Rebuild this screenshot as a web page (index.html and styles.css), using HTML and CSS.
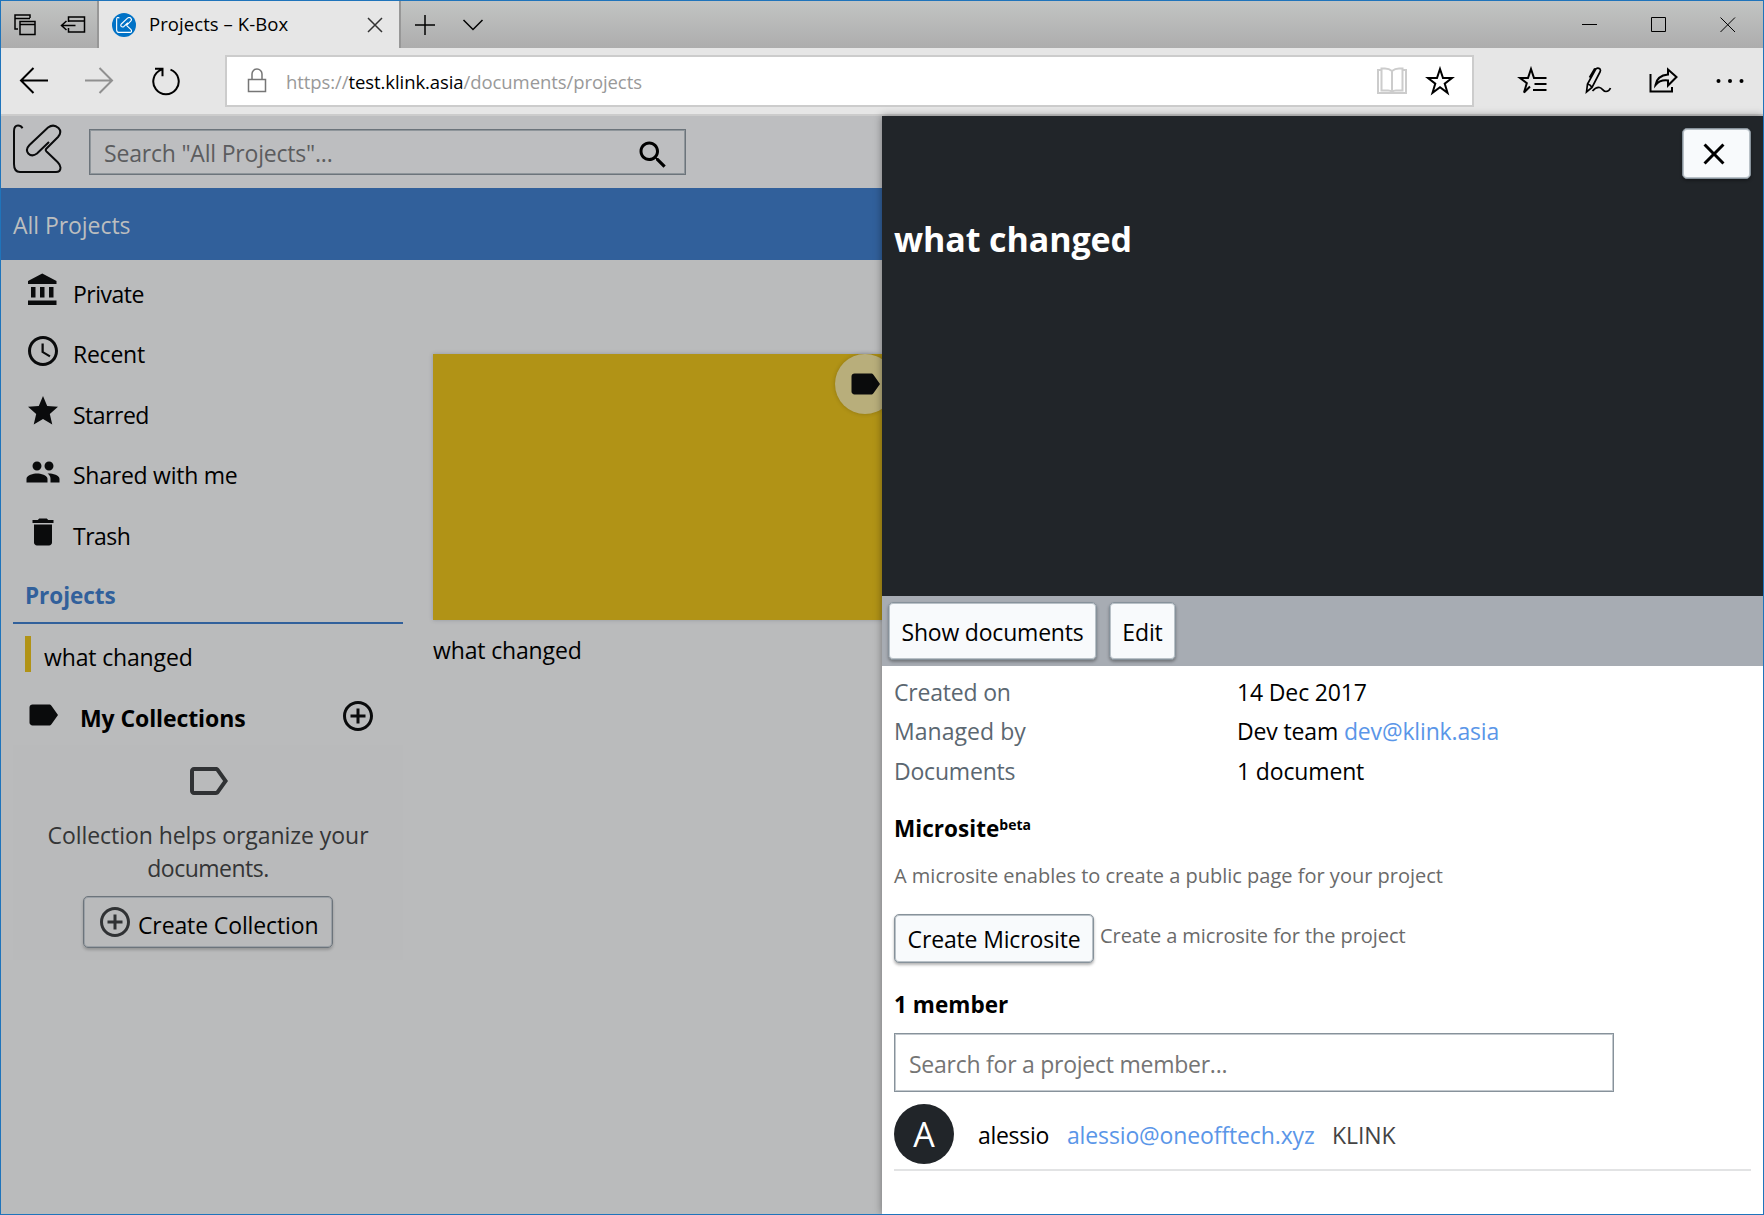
FILE: index.html
```html
<!DOCTYPE html>
<html lang="en">
<head>
<meta charset="utf-8">
<title>Projects – K-Box</title>
<link rel="stylesheet" href="styles.css">
</head>
<body>
<svg class="defs" width="0" height="0">
  <symbol id="label" viewBox="0 0 24 24"><path d="M17.630 5.840C17.270 5.330 16.670 5 16 5L5 5.010C3.900 5.010 3 5.900 3 7v10c0 1.100.9 1.990 2 1.990L16 19c.67 0 1.270-.33 1.630-.84L22 12l-4.370-6.160z"/></symbol>
  <symbol id="plus" viewBox="0 0 24 24"><path d="M13 7h-2v4H7v2h4v4h2v-4h4v-2h-4V7zm-1-5C6.480 2 2 6.480 2 12s4.480 10 10 10 10-4.480 10-10S17.520 2 12 2zm0 18c-4.410 0-8-3.590-8-8s3.590-8 8-8 8 3.590 8 8-3.590 8-8 8z"/></symbol>
  <symbol id="logo" viewBox="0 0 50 50"><path d="M10.500 4.200Q9 1.500 6 1.500Q2 1.500 2 7V40Q2 48 8 48H44Q48.500 48 48.500 43.500Q48.500 41 45.500 38L34.500 27.500Q33 26 34.500 24.500L46 13Q50.300 8 46.500 4Q41.500 -.500 36 3.500L17.500 21Q13 25.500 16.300 29.500Q20 33.200 25 29.500L37 18"/></symbol>
</svg>
<div class="window">
  <header class="tabstrip">
    <div class="tabtools">
      <svg width="24" height="24" viewBox="0 0 24 24"><path d="M5 16H2V2h15v3M2 5.500h15M7 8.500h15v13H7zM7 11.500h15"/></svg>
      <svg width="26" height="24" viewBox="0 0 26 24"><path d="M8.500 9V4h16v15h-16v-4M8.500 8h16M1.500 12.500h14M6.500 8l-5 4.500 5 4.500"/></svg>
    </div>
    <div class="tab">
      <span class="favicon"><svg width="16" height="16"><use href="#logo"/></svg></span>
      <span class="tabtitle">Projects – K-Box</span>
      <svg class="tabclose" width="16" height="16" viewBox="0 0 16 16"><path d="M1 1l14 14M15 1L1 15"/></svg>
    </div>
    <svg class="newtab" width="22" height="22" viewBox="0 0 22 22"><path d="M1 11h20M11 1v20"/></svg>
    <svg class="tabmenu" width="22" height="14" viewBox="0 0 22 14"><path d="M1.500 2l9.500 9.500L20.500 2"/></svg>
    <div class="wincontrols">
      <svg width="16" height="16" viewBox="0 0 16 16"><path d="M0 7.500h15"/></svg>
      <svg width="16" height="16" viewBox="0 0 16 16"><path d="M.5.500h14v14H.5z"/></svg>
      <svg width="16" height="16" viewBox="0 0 16 16"><path d="M.5.500l14.500 14.500M15 .5L.5 15"/></svg>
    </div>
  </header>
  <nav class="toolbar">
    <svg class="back" width="30" height="28" viewBox="0 0 30 28"><path d="M29 13.500H2M14.500 1L2 13.500 14.500 26"/></svg>
    <svg class="forward" width="30" height="28" viewBox="0 0 30 28"><path d="M1 13.500h27M15.500 1L28 13.500 15.500 26"/></svg>
    <svg class="reload" width="30" height="30" viewBox="0 0 30 30"><path d="M10.500 3.600A12.700 12.700 0 1 0 19.500 3.600M4 2.700h7.500v7.500"/></svg>
    <div class="address">
      <svg class="lock" width="20" height="26" viewBox="0 0 20 26"><path d="M1.500 11.500h17v12h-17zM5 11.500V6a5 5 0 0 1 10 0v5.500"/></svg>
      <span class="url">https://<b>test.klink.asia</b>/documents/projects</span>
      <svg class="book" width="30" height="28" viewBox="0 0 30 28"><path d="M4.500 3H1v23h28V3h-3.500M15 4Q12 1.500 8 1.500H4.500v22H11q3 0 4 1.500 1-1.500 4-1.500h6.500v-22H22Q18 1.500 15 4zM15 4v21"/></svg>
      <svg class="fav" width="30" height="30" viewBox="0 0 30 30"><path d="M15 3l3 9h9l-7.300 5.600 2.800 9.200L15 21.200l-7.500 5.600 2.800-9.200L3 12h9z"/></svg>
    </div>
    <div class="actions">
      <svg width="32" height="30" viewBox="0 0 32 30"><path d="M14 20.500L8 26.500l2.800-9.300L4 12h8L15 3l3 9H30.500M18.500 18h12M17 24h13.500"/></svg>
      <svg width="32" height="30" viewBox="0 0 32 30"><path class="thin" d="M4.500 26L5.500 18 13.500 3.500q2-2.500 4.500-.5 1 1 0 3L10 21.500zM5.500 18q3 .5 4.500 3.500M7.500 11.500L12.500 3l3-.500M10.500 25q3.500-4 7-3.500c3 .5 3.500 4 6.500 4q3 0 4.500-3.500"/></svg>
      <svg width="32" height="30" viewBox="0 0 32 30"><path d="M2.500 8v17.500H24V21M7.500 19Q9 9.500 20 8.500V3.500l8.500 7.500-8.500 8.500v-5Q12 13.500 7.500 19z"/></svg>
      <svg class="dots" width="32" height="30" viewBox="0 0 32 30"><circle cx="4.500" cy="15" r="2"/><circle cx="16" cy="15" r="2"/><circle cx="27.500" cy="15" r="2"/></svg>
    </div>
  </nav>
  <main class="page">
    <section class="browse">
      <div class="pagehead">
        <svg class="logo" width="50" height="50"><use href="#logo"/></svg>
        <div class="search"><span>Search "All Projects"...</span>
          <svg width="36" height="36" viewBox="0 0 24 24"><path d="M15.500 14h-.79l-.28-.27C15.410 12.590 16 11.110 16 9.500 16 5.910 13.090 3 9.500 3S3 5.910 3 9.500 5.910 16 9.500 16c1.610 0 3.090-.59 4.230-1.570l.27.28v.79l5 4.990L20.490 19l-4.990-5zm-6 0C7.010 14 5 11.990 5 9.500S7.010 5 9.500 5 14 7.010 14 9.500 11.990 14 9.500 14z"/></svg>
        </div>
      </div>
      <div class="titlebar">All Projects</div>
      <div class="content">
        <aside class="sidebar">
          <a class="item tight"><svg class="ico" viewBox="0 0 24 24"><path d="M4 10v7h3v-7H4zm6 0v7h3v-7h-3zM2 22h19v-3H2v3zm14-12v7h3v-7h-3zm-4.500-9L2 6v2h19V6l-9.500-5z"/></svg><span>Private</span></a>
          <a class="item"><svg class="ico" viewBox="0 0 24 24"><path d="M11.990 2C6.470 2 2 6.480 2 12s4.470 10 9.990 10C17.520 22 22 17.520 22 12S17.520 2 11.990 2zM12 20c-4.420 0-8-3.580-8-8s3.580-8 8-8 8 3.580 8 8-3.580 8-8 8zm.5-13H11v6l5.250 3.150.75-1.230-4.500-2.670z"/></svg><span>Recent</span></a>
          <a class="item tight"><svg class="ico" viewBox="0 0 24 24"><path d="M12 17.270L18.180 21l-1.640-7.030L22 9.240l-7.190-.61L12 2 9.190 8.630 2 9.240l5.460 4.730L5.820 21z"/></svg><span>Starred</span></a>
          <a class="item"><svg class="ico" viewBox="0 0 24 24"><path d="M16 11c1.660 0 2.990-1.340 2.990-3S17.660 5 16 5c-1.660 0-3 1.340-3 3s1.340 3 3 3zm-8 0c1.660 0 2.990-1.340 2.990-3S9.660 5 8 5C6.340 5 5 6.340 5 8s1.340 3 3 3zm0 2c-2.330 0-7 1.170-7 3.500V19h14v-2.500c0-2.330-4.670-3.500-7-3.500zm8 0c-.29 0-.62.020-.97.050 1.160.84 1.970 1.970 1.970 3.450V19h6v-2.500c0-2.330-4.670-3.500-7-3.500z"/></svg><span>Shared with me</span></a>
          <a class="item tight"><svg class="ico" viewBox="0 0 24 24"><path d="M6 19c0 1.100.9 2 2 2h8c1.100 0 2-.9 2-2V7H6v12zM19 4h-3.500l-1-1h-5l-1 1H5v2h14V4z"/></svg><span>Trash</span></a>
          <h2 class="group">Projects</h2>
          <a class="project"><i></i><span>what changed</span></a>
          <div class="collections"><svg class="ico"><use href="#label"/></svg><b>My Collections</b><svg class="ico add"><use href="#plus"/></svg></div>
          <div class="empty">
            <svg width="48" height="48" viewBox="0 0 24 24"><path d="M17.630 5.840C17.270 5.330 16.670 5 16 5L5 5.010C3.900 5.010 3 5.900 3 7v10c0 1.100.9 1.990 2 1.990L16 19c.67 0 1.270-.33 1.630-.84L22 12l-4.370-6.160zM16 17H5V7h11l3.550 5L16 17z"/></svg>
            <p>Collection helps organize your<br><span class="tight">documents.</span></p>
            <button class="btn create"><svg class="ico"><use href="#plus"/></svg><span>Create Collection</span></button>
          </div>
        </aside>
        <div class="cards">
          <div class="card"><span class="badge"><svg class="ico"><use href="#label"/></svg></span></div>
          <div class="cardname">what changed</div>
        </div>
      </div>
    </section>
    <section class="panel">
      <div class="hero">
        <button class="btn close"><svg width="36" height="36" viewBox="0 0 24 24"><path d="M19 6.410L17.590 5 12 10.590 6.410 5 5 6.410 10.590 12 5 17.590 6.410 19 12 13.410 17.590 19 19 17.590 13.410 12z"/></svg></button>
        <h1>what changed</h1>
      </div>
      <div class="bar"><button class="btn show">Show documents</button><button class="btn edit">Edit</button></div>
      <div class="details">
        <dl>
          <dt>Created on</dt><dd>14 Dec 2017</dd>
          <dt class="loose">Managed by</dt><dd>Dev team <a>dev@klink.asia</a></dd>
          <dt>Documents</dt><dd>1 document</dd>
        </dl>
        <h3 class="micro">Microsite<sup>beta</sup></h3>
        <p class="desc">A microsite enables to create a public page for your project</p>
        <div class="microrow"><button class="btn cm">Create Microsite</button><span class="help">Create a microsite for the project</span></div>
        <h3 class="members">1 member</h3>
        <div class="find">Search for a project member...</div>
        <div class="member"><span class="avatar">A</span><span class="mname">alessio</span><a>alessio@oneofftech.xyz</a><span class="org">KLINK</span></div>
      </div>
    </section>
  </main>
</div>
</body>
</html>
```
FILE: styles.css
```css
* { box-sizing: border-box; }
body { margin: 0; font: 23px/32px "Open Sans", "Noto Sans", sans-serif; letter-spacing: -.15px; color: #000; }
h1, h2, h3, p, dl, dd { margin: 0; }
svg { flex: none; display: block; }
.defs { position: absolute; }
.window { width: 1764px; height: 1215px; border: 1px solid #1f74bb; display: flex; flex-direction: column; overflow: hidden; }
.tight { letter-spacing: -.5px; }
.loose { letter-spacing: 0; }

/* Tab strip */
.tabstrip { height: 47px; flex: none; display: flex; align-items: center; background: linear-gradient(#c2c4c3, #adadad); }
.tabstrip svg { fill: none; stroke: #000; stroke-width: 1.500; }
.tabtools { width: 98px; height: 47px; display: flex; align-items: center; gap: 23px; padding-left: 12px; border-right: 2px solid #979797; }
.tab { width: 302px; height: 47px; display: flex; align-items: center; padding-left: 13px; background: #e6e6e6; border-right: 2px solid #979797; }
.favicon { width: 24px; height: 24px; border-radius: 50%; background: #0072c6; display: flex; align-items: center; justify-content: center; }
.tabstrip .favicon svg { stroke: #fff; stroke-width: 3.500; }
.tabtitle { flex: 1; padding: 0 0 2px 13px; font-size: 18.500px; letter-spacing: .07px; }
.tabstrip .tabclose { margin-right: 16px; stroke: #333; }
.newtab { margin-left: 13px; }
.tabmenu { margin-left: 26px; }
.wincontrols { margin-left: auto; display: flex; gap: 53px; padding-right: 27px; }
.tabstrip .wincontrols svg { stroke-width: 1; }

/* Toolbar */
.toolbar { height: 68px; flex: none; display: flex; align-items: center; background: #e6e6e6; border-bottom: 2px solid #ccc; }
.toolbar svg { fill: none; stroke: #000; stroke-width: 2; }
.toolbar .thin { stroke-width: 1.700; }
.back { margin-left: 18px; }
.forward { margin-left: 35px; }
.toolbar .forward { stroke: #909090; }
.reload { margin-left: 37px; }
.address { margin-left: 44px; width: 1249px; height: 52px; background: #fff; border: 2px solid #ccc; display: flex; align-items: center; padding: 0 17px 0 20px; }
.toolbar .lock { stroke: #767676; stroke-width: 1.500; }
.url { flex: 1; padding: 2px 0 0 19px; font-size: 18.500px; letter-spacing: -.08px; color: #999; }
.url b { font-weight: 400; color: #000; }
.toolbar .book { stroke: #ccc; stroke-width: 2; }
.fav { margin-left: 18px; }
.actions { display: flex; gap: 34px; margin-left: 42px; }
.toolbar .dots { fill: #000; stroke: none; }

/* Page */
.page { flex: 1; display: flex; min-height: 0; }
.browse { width: 881px; flex: none; background: #babbbc; overflow: hidden; }
.pagehead { height: 72px; display: flex; padding-left: 11px; background: #bdbec0; }
.logo { margin-top: 8px; fill: none; stroke: #0a0b0c; stroke-width: 2; }
.search { width: 597px; height: 46px; margin: 13px 0 0 27px; padding: 2px 14px 0 14px; border: 1px solid #6c747b; box-shadow: inset 0 0 0 1px #8f969b; display: flex; align-items: center; justify-content: space-between; color: #5b5c5e; letter-spacing: -.2px; }
.search svg { margin-top: 4px; }
.titlebar { height: 72px; padding: 21px 12px; background: #31609b; color: #bcbebf; letter-spacing: -.05px; }
.content { display: flex; }
.sidebar { width: 390px; flex: none; margin-left: 12px; }
.ico { width: 36px; height: 36px; fill: #0a0b0c; }
.item { height: 60.500px; display: flex; padding: 12px 0 0 12px; gap: 12px; letter-spacing: -.25px; }
.item.tight { letter-spacing: -.5px; }
.item span { padding-top: 5.500px; }
.group { height: 61px; padding: 17px 12px; font-size: 22.500px; letter-spacing: -.05px; color: #31609b; border-bottom: 2px solid #31609b; }
.project { display: flex; height: 60px; padding: 12px 0 0 12px; }
.project i { width: 6px; height: 36px; background: #b19316; }
.project span { padding: 5px 0 0 13px; }
.collections { display: flex; height: 61px; padding: 13px 27px 0 12px; }
.collections b { padding: 5px 0 0 19px; flex: 1; letter-spacing: -.1px; }
.add { margin-top: 1px; }
.empty { display: flex; flex-direction: column; align-items: center; height: 215px; padding-top: 12px; background: #b9babb; color: #343536; letter-spacing: -.05px; }
.empty svg { fill: #303234; }
.empty p { padding-top: 14px; line-height: 33px; text-align: center; }
.btn { font: inherit; letter-spacing: inherit; color: #000; border: 1px solid #87929b; border-radius: 5px; background: #f8fafc; box-shadow: inset 0 0 0 1px #b9c1c7, 0 2px 3px rgba(0,0,0,.3); padding: 0; white-space: nowrap; }
.create { width: 250px; height: 52px; margin-top: 11px; display: flex; padding: 7px 0 0 13px; gap: 5px; background: none; border-color: #6c747b; box-shadow: inset 0 0 0 1px #9aa0a6, 0 2px 3px rgba(0,0,0,.2); letter-spacing: -.12px; }
.create span { padding-top: 5px; }
.cards { margin: 94px 0 0 30px; flex: none; width: 462px; }
.card { height: 266px; background: #b19316; display: flex; justify-content: flex-end; box-shadow: 0 0 4px rgba(60,70,90,.3); }
.badge { width: 60px; height: 60px; border-radius: 50%; background: #b8ae7b; box-shadow: 0 0 4px rgba(0,0,0,.2); display: flex; align-items: center; justify-content: center; }
.cardname { padding-top: 14px; }

/* Project panel */
.panel { flex: 1; background: #fff; box-shadow: 0 0 8px rgba(0,0,0,.4); position: relative; }
.hero { height: 480px; background: #212529; display: flex; flex-direction: column; padding: 12px 12px 0 12px; }
.close { width: 69px; height: 51px; align-self: flex-end; display: flex; align-items: center; padding-left: 13px; }
h1 { padding-top: 35px; font-size: 34px; line-height: 50px; letter-spacing: -.1px; color: #fff; }
.bar { height: 70px; display: flex; gap: 12px; padding: 6px; background: #a7acb3; }
.show { width: 209px; height: 58px; padding-top: 2px; letter-spacing: -.2px; }
.edit { width: 67px; height: 58px; padding-top: 2px; }
.details { padding: 10px 12px 0; }
dl { display: grid; grid-template-columns: 343px 1fr; grid-template-rows: 39px 40px 39.500px; }
dt { color: #5b6771; letter-spacing: -.2px; }
dt.loose { letter-spacing: .05px; }
a { color: #5a96e8; }
.item, .project { color: #000; }
h3 { font-size: 22.500px; letter-spacing: .05px; }
.micro { display: flex; margin-top: 18px; }
.micro sup { font-size: 14px; line-height: 24px; letter-spacing: -.05px; }
.desc, .help { font-size: 20px; letter-spacing: 0; color: #6a6a6a; }
.desc { margin-top: 15px; }
.microrow { display: flex; margin-top: 22px; }
.help { padding: 6px 0 0 6px; letter-spacing: -.07px; }
.cm { width: 200px; height: 49px; padding-top: 2px; }
.members { margin-top: 26px; }
.find { width: 720px; height: 59px; margin-top: 12px; border: 1px solid #87929b; box-shadow: inset 0 0 0 1px #c3c9ce; color: #757575; padding: 14px 14px; letter-spacing: -.25px; }
.member { display: flex; align-items: center; height: 79px; padding: 12px 0 5px; border-bottom: 2px solid #e2e3e4; }
.member a { margin: 3px 17.500px 0 18px; letter-spacing: -.13px; }
.avatar { width: 60px; height: 60px; border-radius: 50%; background: #212529; color: #fff; font-size: 34px; display: flex; align-items: center; justify-content: center; }
.mname { margin: 3px 0 0 24px; letter-spacing: -.3px; }
.org { margin-top: 3px; color: #444; letter-spacing: -.1px; }
```
